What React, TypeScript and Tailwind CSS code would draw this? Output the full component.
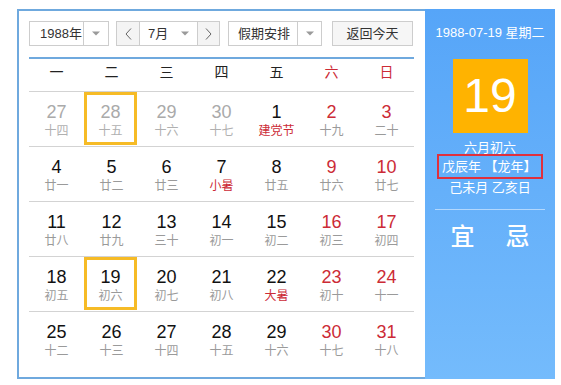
import React from "react";

const FONT = { fontFamily: '"Liberation Sans", Arial, "Noto Sans CJK SC", sans-serif' };

type Cell = { n: number; l: string; gray?: boolean; red?: boolean; lred?: boolean; sel?: boolean };

const rows: Cell[][] = [
  [
    { n: 27, l: "十四", gray: true },
    { n: 28, l: "十五", gray: true, sel: true },
    { n: 29, l: "十六", gray: true },
    { n: 30, l: "十七", gray: true },
    { n: 1, l: "建党节", lred: true },
    { n: 2, l: "十九", red: true },
    { n: 3, l: "二十", red: true },
  ],
  [
    { n: 4, l: "廿一" },
    { n: 5, l: "廿二" },
    { n: 6, l: "廿三" },
    { n: 7, l: "小暑", lred: true },
    { n: 8, l: "廿五" },
    { n: 9, l: "廿六", red: true },
    { n: 10, l: "廿七", red: true },
  ],
  [
    { n: 11, l: "廿八" },
    { n: 12, l: "廿九" },
    { n: 13, l: "三十" },
    { n: 14, l: "初一" },
    { n: 15, l: "初二" },
    { n: 16, l: "初三", red: true },
    { n: 17, l: "初四", red: true },
  ],
  [
    { n: 18, l: "初五" },
    { n: 19, l: "初六", sel: true },
    { n: 20, l: "初七" },
    { n: 21, l: "初八" },
    { n: 22, l: "大暑", lred: true },
    { n: 23, l: "初十", red: true },
    { n: 24, l: "十一", red: true },
  ],
  [
    { n: 25, l: "十二" },
    { n: 26, l: "十三" },
    { n: 27, l: "十四" },
    { n: 28, l: "十五" },
    { n: 29, l: "十六" },
    { n: 30, l: "十七", red: true },
    { n: 31, l: "十八", red: true },
  ],
];

const weekdays = ["一", "二", "三", "四", "五", "六", "日"];

function Caret() {
  return (
    <svg width="8" height="5" viewBox="0 0 8 5">
      <path d="M0 0.5 L8 0.5 L4 4.5 Z" fill="#9a9a9a" />
    </svg>
  );
}

function Chevron({ dir }: { dir: "l" | "r" }) {
  return (
    <svg width="7" height="12" viewBox="0 0 7 12">
      <path
        d={dir === "l" ? "M6 0.5 L1 6 L6 11.5" : "M1 0.5 L6 6 L1 11.5"}
        fill="none"
        stroke="#666"
        strokeWidth="1"
      />
    </svg>
  );
}

export default function App() {
  return (
    <div className="w-[561px] h-[385px] bg-white pt-[9px] pl-[17px]" style={FONT}>
      <div className="flex w-[538px] h-[370px]">
        {/* Left calendar */}
        <div className="w-[408px] h-full border-l-2 border-t-2 border-b-2 border-[#6fa9de] pl-[10px] pr-[11px] pt-[10px]">
          {/* Controls */}
          <div className="flex h-[25px] text-[13px] text-[#333]">
            <div className="flex w-[80px] h-full border border-[#cdcdcd] bg-white">
              <div className="flex-1 flex items-center pl-[10px] leading-none">1988年</div>
              <div className="w-[25px] border-l border-[#cdcdcd] flex items-center justify-center">
                <Caret />
              </div>
            </div>
            <div className="flex w-[104px] h-full border border-[#cdcdcd] ml-[7px]">
              <div className="w-[23px] bg-[#f4f4f4] border-r border-[#cdcdcd] flex items-center justify-center">
                <Chevron dir="l" />
              </div>
              <div className="flex-1 flex items-center bg-white pl-[8px]">
                <span className="leading-none">7月</span>
                <span className="ml-auto mr-[8px] flex">
                  <Caret />
                </span>
              </div>
              <div className="w-[22px] bg-[#f4f4f4] border-l border-[#cdcdcd] flex items-center justify-center">
                <Chevron dir="r" />
              </div>
            </div>
            <div className="flex w-[94px] h-full border border-[#cdcdcd] bg-white ml-[8px]">
              <div className="flex-1 flex items-center pl-[9px] leading-none">假期安排</div>
              <div className="w-[24px] border-l border-[#cdcdcd] flex items-center justify-center">
                <Caret />
              </div>
            </div>
            <div className="w-[81px] h-full border border-[#cdcdcd] bg-[#f6f6f6] ml-[10px] flex items-center justify-center leading-none">
              返回今天
            </div>
          </div>
          {/* Blue line */}
          <div className="mt-[11px] h-[2px] bg-[#6fa9de]" />
          {/* Header */}
          <div className="grid grid-cols-7 h-[32px] pt-[3px]">
            {weekdays.map((w, i) => (
              <div
                key={w}
                className={`text-center text-[14px] leading-[20px] ${i >= 5 ? "text-[#cc2b36]" : "text-[#222]"}`}
              >
                {w}
              </div>
            ))}
          </div>
          {/* Rows */}
          {rows.map((row, ri) => (
            <div key={ri} className="grid grid-cols-7 h-[55px] border-t border-[#d3d3d3]">
              {row.map((c, ci) => {
                const numColor = c.gray ? "text-[#aaaaaa]" : c.red ? "text-[#cc2b36]" : "text-[#111]";
                const lColor = c.lred ? "text-[#cc2b36]" : c.gray ? "text-[#b0b0b0]" : "text-[#9a9a9a]";
                return (
                  <div key={ci} className="h-[54px]">
                    <div
                      className={
                        c.sel
                          ? "w-[53px] h-[53px] border-[3px] border-[#f6bb26] pt-[7px] flex flex-col items-center"
                          : "w-[55px] h-[54px] pt-[10px] flex flex-col items-center"
                      }
                    >
                      <div className={`text-[18px] leading-[20px] ${numColor}`}>{c.n}</div>
                      <div className={`text-[12px] leading-[16px] mt-px ${lColor}`}>{c.l}</div>
                    </div>
                  </div>
                );
              })}
            </div>
          ))}
        </div>
        {/* Right panel */}
        <div className="w-[130px] h-full bg-gradient-to-b from-[#56a5f8] to-[#74bbfc] text-white flex flex-col items-center">
          <div className="mt-[15px] text-[13px] leading-[18px]">1988-07-19 星期二</div>
          <div className="mt-[17px] w-[75px] h-[74px] bg-[#ffb300] flex items-center justify-center">
            <span className="text-[48px] leading-none">19</span>
          </div>
          <div className="mt-[8px] text-[13px] leading-[14px]">六月初六</div>
          <div className="-mt-px w-[106px] h-[25px] border-2 border-[#e0303c] text-[13px] leading-[19px] pt-[1px] pl-[3px] text-left whitespace-nowrap">
            戊辰年 【龙年】
          </div>
          <div className="text-[13px] leading-[18px]">己未月 乙亥日</div>
          <div className="mt-[12px] w-[110px] h-px bg-white/50" />
          <div className="mt-[13px] flex gap-[31px] text-[24px] leading-[28px] font-medium">
            <span>宜</span>
            <span>忌</span>
          </div>
        </div>
      </div>
    </div>
  );
}
